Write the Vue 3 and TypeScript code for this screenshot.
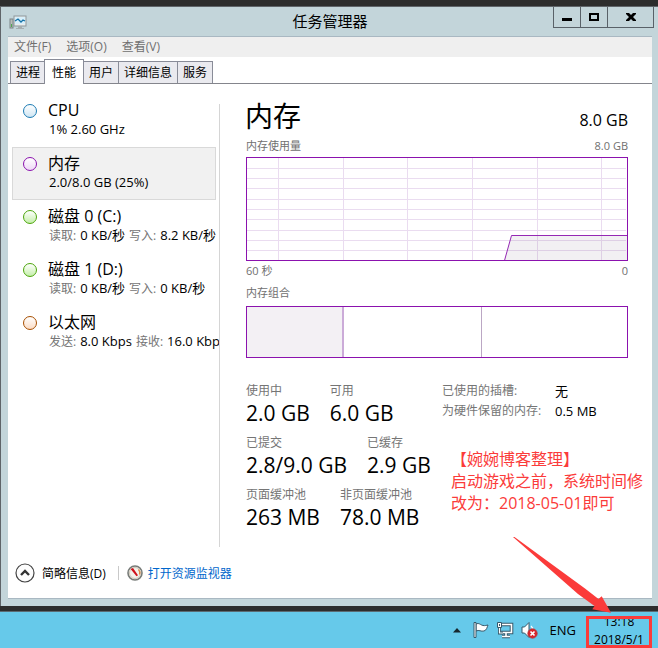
<script setup lang="ts">
import { ref } from 'vue'

interface Part { text: string; muted?: boolean }
interface Resource { id: string; name: string; tone: string; detail: Part[] }
interface Stat { label: string; value: string }

const menus: string[] = ['文件(F)', '选项(O)', '查看(V)']
const tabs: string[] = ['进程', '性能', '用户', '详细信息', '服务']
const activeTab = ref('性能')
const selected = ref('memory')

const resources: Resource[] = [
  { id: 'cpu', name: 'CPU', tone: 'blue', detail: [{ text: '1% 2.60 GHz' }] },
  { id: 'memory', name: '内存', tone: 'purple', detail: [{ text: '2.0/8.0 GB (25%)' }] },
  {
    id: 'disk0', name: '磁盘 0 (C:)', tone: 'green',
    detail: [{ text: '读取:', muted: true }, { text: '0 KB/秒' }, { text: '写入:', muted: true }, { text: '8.2 KB/秒' }],
  },
  {
    id: 'disk1', name: '磁盘 1 (D:)', tone: 'green',
    detail: [{ text: '读取:', muted: true }, { text: '0 KB/秒' }, { text: '写入:', muted: true }, { text: '0 KB/秒' }],
  },
  {
    id: 'ethernet', name: '以太网', tone: 'orange',
    detail: [{ text: '发送:', muted: true }, { text: '8.0 Kbps' }, { text: '接收:', muted: true }, { text: '16.0 Kbps' }],
  },
]

const statRows: Stat[][] = [
  [{ label: '使用中', value: '2.0 GB' }, { label: '可用', value: '6.0 GB' }],
  [{ label: '已提交', value: '2.8/9.0 GB' }, { label: '已缓存', value: '2.9 GB' }],
  [{ label: '页面缓冲池', value: '263 MB' }, { label: '非页面缓冲池', value: '78.0 MB' }],
]

const gridX: number[] = [32, 97, 161, 226, 291, 355]
const gridY: number[] = [11, 21, 31, 42, 52, 62, 73, 83, 93]
</script>

<template>
  <div class="desktop">
    <section class="window">
      <header class="titlebar">
        <svg class="app-icon" width="18" height="16" viewBox="0 0 18 16" aria-hidden="true">
          <rect x="1" y="4" width="3" height="9" fill="#b9bdb9" stroke="#7d8588" stroke-width="1" />
          <rect x="2" y="9" width="1" height="3" fill="#4fa850" />
          <rect x="5" y="1" width="12" height="10" fill="#e8ecec" stroke="#8d979b" />
          <rect x="6" y="2" width="10" height="7" fill="#d7effa" />
          <path d="M6 6l3-2 3 3 2-2 2 1" fill="none" stroke="#1673a8" stroke-width="1.3" />
          <path d="M9 11h4v2h2v1H7v-1h2z" fill="#a5adb0" />
        </svg>
        <h1 class="title">任务管理器</h1>
        <div class="controls">
          <button type="button" aria-label="最小化">
            <svg width="12" height="10" viewBox="0 0 12 10"><path d="M1 6h10v3H1z" /></svg>
          </button>
          <button type="button" aria-label="最大化">
            <svg width="12" height="10" viewBox="0 0 12 10"><path fill-rule="evenodd" d="M1 1h10v8H1zM3 3v4h6V3z" /></svg>
          </button>
          <button type="button" class="close" aria-label="关闭">
            <svg width="12" height="10" viewBox="0 0 12 10"><path d="M1 1h3l2 2 2-2h3v1L8 5l3 3v1H8L6 7 4 9H1V8l3-3-3-3z" /></svg>
          </button>
        </div>
      </header>

      <div class="client">
        <nav class="menu">
          <button v-for="m in menus" :key="m" type="button">{{ m }}</button>
        </nav>
        <div class="tabs" role="tablist">
          <button
            v-for="t in tabs" :key="t" type="button" role="tab"
            :aria-selected="t === activeTab" :class="{ active: t === activeTab }"
            @click="activeTab = t"
          >{{ t }}</button>
        </div>

        <div class="body">
          <aside class="resources">
            <button
              v-for="r in resources" :key="r.id" type="button" class="resource"
              :class="{ selected: r.id === selected }" @click="selected = r.id"
            >
              <span class="dot" :class="r.tone"></span>
              <span class="texts">
                <span class="name">{{ r.name }}</span>
                <span class="detail">
                  <span v-for="(p, i) in r.detail" :key="i" :class="{ muted: p.muted }">{{ p.text }}</span>
                </span>
              </span>
            </button>
          </aside>
          <div class="divider"></div>

          <main class="panel">
            <div class="heading">
              <h2>内存</h2>
              <span class="total">8.0 GB</span>
            </div>
            <div class="caption"><span>内存使用量</span><span>8.0 GB</span></div>
            <svg class="chart" viewBox="0 0 382 104" preserveAspectRatio="none" role="img" aria-label="内存使用量">
              <g stroke="#eadcf0" stroke-width="1">
                <line v-for="x in gridX" :key="'x' + x" :x1="x + 0.5" :x2="x + 0.5" y1="1" y2="103" />
                <line v-for="y in gridY" :key="'y' + y" x1="1" x2="380" :y1="y + 0.5" :y2="y + 0.5" />
              </g>
              <path d="M258.5 103.5L265.5 78.5H381.5V103.5z" fill="#5b4166" fill-opacity="0.08" />
              <path d="M258.5 103.5L265.5 78.5H381.5" fill="none" stroke="#9528b4" stroke-width="1" />
              <rect x="0.5" y="0.5" width="381" height="103" fill="none" stroke="#8b12ae" stroke-width="1" />
            </svg>
            <div class="caption axis"><span>60 秒</span><span>0</span></div>
            <div class="caption composition-label"><span>内存组合</span></div>
            <div class="composition">
              <div class="used"></div>
              <div class="standby"></div>
              <div class="free"></div>
            </div>

            <div class="facts">
              <div class="stats">
                <div v-for="(row, i) in statRows" :key="i" class="stat-row">
                  <div v-for="s in row" :key="s.label" class="stat">
                    <div class="label">{{ s.label }}</div>
                    <div class="value">{{ s.value }}</div>
                  </div>
                </div>
              </div>
              <dl class="hardware">
                <dt>已使用的插槽:</dt><dd>无</dd>
                <dt>为硬件保留的内存:</dt><dd>0.5 MB</dd>
              </dl>
            </div>
          </main>
        </div>

        <footer class="footer">
          <button type="button" class="fewer">
            <svg width="20" height="20" viewBox="0 0 20 20" aria-hidden="true">
              <circle cx="10" cy="10" r="9" fill="#fdfdfd" stroke="#444" stroke-width="1.2" />
              <path d="M6 12L10 8l4 4" fill="none" stroke="#333" stroke-width="2.4" />
            </svg>
            <span>简略信息(D)</span>
          </button>
          <span class="bar"></span>
          <a href="#" class="monitor">
            <svg width="16" height="16" viewBox="0 0 16 16" aria-hidden="true">
              <circle cx="8" cy="8" r="7" fill="#f4f1ea" stroke="#777b78" stroke-width="1.6" />
              <circle cx="8" cy="8" r="5.5" fill="none" stroke="#cfc8bb" />
              <path d="M11.5 4.5a5 5 0 0 1 1 5" fill="none" stroke="#e08a45" stroke-width="1.3" />
              <path d="M3.600 4l2.400-1 5 7.300-1.500 1z" fill="#d0101a" />
            </svg>
            <span>打开资源监视器</span>
          </a>
        </footer>
      </div>
    </section>

    <div class="taskbar">
      <button type="button" class="tray up" aria-label="显示隐藏的图标">
        <svg width="8" height="5" viewBox="0 0 8 5"><path d="M4 0l4 4.5H0z" fill="#17272e" /></svg>
      </button>
      <button type="button" class="tray" aria-label="操作中心">
        <svg width="18" height="18" viewBox="0 0 18 18">
          <path d="M4 3c3-1.5 4.500 1 7 1.500 2 .4 3.500-.2 5-.5-1 2-1 5-4 6-3 .8-5-1.500-8 0z" fill="#fff" stroke="#36586a" />
          <path d="M2 1.500h2v15H2z" fill="#fff" stroke="#36586a" />
        </svg>
      </button>
      <button type="button" class="tray" aria-label="网络">
        <svg width="18" height="18" viewBox="0 0 18 18">
          <path d="M6 3.500h9.500v8H5M10 12v3M6 15.500h8" fill="none" stroke="#36586a" stroke-width="3.600" />
          <path d="M6 3.500h9.500v8H5M10 12v3M6 15.500h8" fill="none" stroke="#fff" stroke-width="1.600" />
          <path d="M3.500 7v5H7" fill="none" stroke="#36586a" stroke-width="3" />
          <path d="M3.500 7v5H7" fill="none" stroke="#fff" stroke-width="1.200" />
          <path d="M1.500 1.500h4v5h-4z" fill="#fff" stroke="#36586a" />
          <path d="M3 3h1v2H3z" fill="#36586a" />
        </svg>
      </button>
      <button type="button" class="tray" aria-label="音量">
        <svg width="18" height="18" viewBox="0 0 18 18">
          <path d="M2 6h2.500L9 1.500v15L4.500 12H2z" fill="#fff" stroke="#36586a" />
          <path d="M11 5q2 1.500 1.500 4" fill="none" stroke="#fff" stroke-width="1.300" />
          <circle cx="12.500" cy="12.500" r="4.700" fill="#d8252b" stroke="#b2383c" stroke-width="0.800" />
          <path d="M10.500 10.500l4 4M14.500 10.500l-4 4" stroke="#fff" stroke-width="1.700" />
        </svg>
      </button>
      <button type="button" class="language">ENG</button>
      <button type="button" class="clock">
        <span>13:18</span>
        <span>2018/5/1</span>
      </button>
    </div>

    <p class="note">【婉婉博客整理】<br />启动游戏之前，系统时间修<br />改为：2018-05-01即可</p>
    <svg class="arrow" width="100" height="78" viewBox="0 0 100 78" aria-hidden="true">
      <path d="M0 0L1.500 0 72 51.500 85.500 62 88.700 59.300 98 75.700 79.300 72.300 81.500 69 65 57z" fill="#fb3b3a" />
    </svg>
  </div>
</template>

<style>
body {
  margin: 0;
}
</style>

<style scoped>
.desktop {
  position: relative;
  display: flex;
  flex-direction: column;
  min-height: 100vh;
  box-sizing: border-box;
  padding-top: 6px;
  overflow: hidden;
  background: #2d2d2d;
  color: #000;
  font-family: "Open Sans", "Noto Sans CJK SC", sans-serif;
  font-size: 12px;
}
button {
  margin: 0;
  padding: 0;
  border: 0;
  background: none;
  color: inherit;
  font: inherit;
  text-align: left;
  white-space: nowrap;
}
h1, h2, p, dl, dd {
  margin: 0;
  font-weight: 400;
}
svg {
  display: block;
}
.window {
  flex: 1;
  display: flex;
  flex-direction: column;
  padding: 0 6px 7px 7px;
  border: 1px solid #5f6469;
  border-right: 0;
  border-bottom-width: 0;
  background: #c3d5da;
}
.titlebar {
  display: grid;
  grid-template-columns: 1fr auto 1fr;
  height: 29px;
}
.app-icon {
  margin: 8px 0 0 1px;
}
.title {
  font-size: 15px;
  line-height: 28px;
}
.controls {
  display: flex;
  justify-self: end;
  height: 21px;
  margin-right: -2px;
}
.controls button {
  display: flex;
  align-items: center;
  justify-content: center;
  box-sizing: border-box;
  width: 27px;
  border: 1px solid #596168;
  border-width: 0 0 1px 1px;
}
.controls .close {
  width: 47px;
  border-right-width: 1px;
}
.client {
  flex: 1;
  display: flex;
  flex-direction: column;
  border-top: 1px solid #a9b8c2;
  border-bottom: 1px solid #a9b8c2;
  background: #fff;
}
.menu {
  display: flex;
  gap: 15px;
  height: 20px;
  padding-left: 6px;
  background: #efefef;
  color: #707070;
  line-height: 20px;
}
.tabs {
  display: flex;
  align-items: flex-end;
  height: 26px;
  padding-left: 2px;
  border-bottom: 1px solid #84858c;
}
.tabs button {
  height: 22px;
  box-sizing: border-box;
  padding: 0 5px;
  border: 1px solid #898c98;
  border-width: 1px 1px 0 0;
  background: #eaeaef;
  line-height: 21px;
}
.tabs button:first-child {
  border-left-width: 1px;
}
.tabs .active {
  height: 25px;
  margin: 0 0 -1px -2px;
  padding: 0 7px;
  border-left-width: 1px;
  background: #fff;
}
.body {
  flex: 1;
  display: flex;
}
.resources {
  display: flex;
  flex-direction: column;
  width: 211px;
  padding-top: 10px;
  overflow: hidden;
}
.resource {
  display: flex;
  gap: 11px;
  box-sizing: border-box;
  height: 53px;
  margin: 0 3px 0 4px;
  padding: 5px 0 0 10px;
  border: 1px solid transparent;
}
.selected {
  border-color: #d9d9d9;
  background: #f1f1f1;
}
.dot {
  flex: none;
  box-sizing: border-box;
  width: 14px;
  height: 14px;
  margin-top: 4px;
  border: 1px solid;
  border-radius: 50%;
}
.blue {
  border-color: #1c7bb3;
  background: linear-gradient(#fff, #cfe6f4);
}
.purple {
  border-color: #8b12ae;
  background: linear-gradient(#fff, #eed9f6);
}
.green {
  border-color: #4da60c;
  background: linear-gradient(#fff, #c5efaa);
}
.orange {
  border-color: #a74f01;
  background: linear-gradient(#fff, #fbdcc5);
}
.texts {
  display: flex;
  flex-direction: column;
}
.name {
  font-size: 16px;
  line-height: 20px;
}
.detail {
  display: flex;
  align-items: baseline;
  gap: 4px;
  padding-left: 1px;
  font-size: 13px;
  line-height: 18px;
}
.muted {
  color: #757575;
  font-size: 12px;
}
.divider {
  width: 1px;
  margin-top: 20px;
  background: #d5d5d5;
}
.panel {
  flex: 1;
  min-width: 0;
  padding: 14px 24px 0 26px;
}
.heading {
  display: flex;
  align-items: flex-start;
  justify-content: space-between;
  height: 40px;
}
.heading h2 {
  margin-left: -1px;
  font-size: 28px;
  line-height: 36px;
}
.total {
  padding-top: 12px;
  font-size: 16px;
  line-height: 20px;
}
.caption {
  display: flex;
  justify-content: space-between;
  color: #707070;
  font-size: 11px;
  line-height: 16px;
}
.chart {
  width: 100%;
  height: 104px;
  margin: 3px 0 2px;
}
.composition-label {
  margin: 6px 0 5px;
}
.composition {
  display: flex;
  box-sizing: border-box;
  height: 52px;
  border: 1px solid #8b12ae;
}
.used {
  flex: 95;
  border-right: 2px solid #cbabd8;
  background: #f3f0f4;
}
.standby {
  flex: 137;
  border-right: 1px solid #bba7c4;
}
.free {
  flex: 145;
}
.facts {
  display: flex;
  margin-top: 23px;
}
.stats {
  display: flex;
  flex-direction: column;
  gap: 8px;
  width: 196px;
  padding-top: 1px;
}
.stat-row {
  display: flex;
  gap: 20px;
  white-space: nowrap;
}
.label {
  color: #757575;
  line-height: 18px;
}
.value {
  font-size: 21px;
  line-height: 26px;
}
.hardware {
  display: grid;
  grid-template-columns: 113px auto;
  align-content: start;
  line-height: 20px;
  white-space: nowrap;
}
.hardware dt {
  color: #757575;
}
.hardware dd {
  font-size: 13px;
}
.footer {
  display: flex;
  align-items: center;
  height: 50px;
  padding: 1px 0 0 7px;
}
.fewer, .monitor {
  display: flex;
  align-items: center;
  gap: 7px;
}
.bar {
  width: 1px;
  height: 14px;
  margin: 0 8px 0 12px;
  background: #c9c9c9;
}
.monitor {
  gap: 5px;
  color: #0066cc;
  text-decoration: none;
}
.taskbar {
  display: flex;
  align-items: center;
  justify-content: flex-end;
  height: 36px;
  margin-top: 5px;
  padding-right: 6px;
  border-top: 1px solid #5b6b73;
  background: #66c9ea;
}
.tray {
  margin-right: 6px;
}
.up {
  margin-right: 11px;
}
.language {
  margin: 0 10px 0 6px;
  font-size: 13px;
}
.clock {
  position: relative;
  display: flex;
  flex-direction: column;
  align-items: center;
  align-self: flex-end;
  justify-content: center;
  box-sizing: border-box;
  width: 66px;
  height: 32px;
  padding-bottom: 2px;
  line-height: 18px;
}
.clock::after {
  content: "";
  position: absolute;
  inset: 0;
  border: 3px solid #fb3b3a;
}
.note {
  position: absolute;
  top: 448px;
  left: 451px;
  color: #fb3b3a;
  font-size: 16px;
  line-height: 22px;
  white-space: nowrap;
}
.arrow {
  position: absolute;
  top: 537px;
  left: 513px;
}
</style>
